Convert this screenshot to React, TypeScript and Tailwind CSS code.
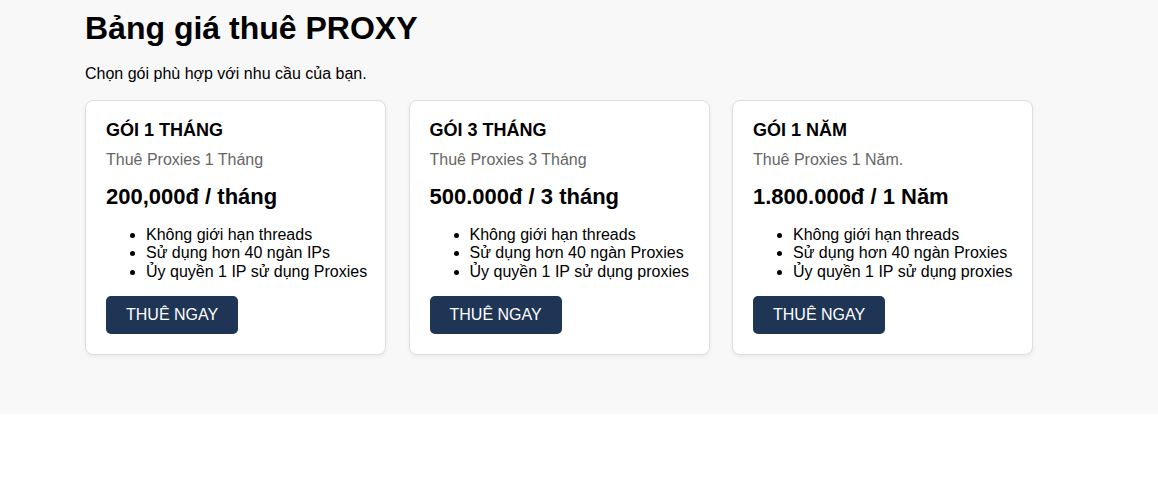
const plans = [
  {
    name: "GÓI 1 THÁNG",
    desc: "Thuê Proxies 1 Tháng",
    price: "200,000đ / tháng",
    features: [
      "Không giới hạn threads",
      "Sử dụng hơn 40 ngàn IPs",
      "Ủy quyền 1 IP sử dụng Proxies",
    ],
  },
  {
    name: "GÓI 3 THÁNG",
    desc: "Thuê Proxies 3 Tháng",
    price: "500.000đ / 3 tháng",
    features: [
      "Không giới hạn threads",
      "Sử dụng hơn 40 ngàn Proxies",
      "Ủy quyền 1 IP sử dụng proxies",
    ],
  },
  {
    name: "GÓI 1 NĂM",
    desc: "Thuê Proxies 1 Năm.",
    price: "1.800.000đ / 1 Năm",
    features: [
      "Không giới hạn threads",
      "Sử dụng hơn 40 ngàn Proxies",
      "Ủy quyền 1 IP sử dụng proxies",
    ],
  },
];

const PlanCard = ({ plan }: { plan: (typeof plans)[number] }) => {
  return (
    <div className="w-[301px] rounded-lg border border-[#dedede] bg-white px-5 pt-[19px] pb-5 shadow-[0_2px_4px_rgba(0,0,0,0.06)]">
      <h3 className="text-[18px] leading-[21px] font-bold text-black">
        {plan.name}
      </h3>
      <p className="mt-[10px] text-[16px] leading-[18px] text-[#666]">
        {plan.desc}
      </p>
      <p className="mt-[15px] text-[22px] leading-[25px] font-bold text-black">
        {plan.price}
      </p>
      <ul className="mt-[17px] list-disc pl-10 text-[16px] leading-[18.4px] text-black">
        {plan.features.map((f) => (
          <li key={f} className="whitespace-nowrap">
            {f}
          </li>
        ))}
      </ul>
      <button className="mt-[15px] rounded-[5px] bg-[#1f3556] px-5 py-[10px] text-[16px] leading-[18px] text-white">
        THUÊ NGAY
      </button>
    </div>
  );
};

export default function App() {
  return (
    <div className="min-h-[504px] bg-white font-['Liberation_Sans',Arial,sans-serif]">
      <section className="bg-[#f8f8f8] px-[85px] pt-[10px] pb-[59px]">
        <h1 className="text-[32px] leading-[37px] font-bold text-black">
          Bảng giá thuê PROXY
        </h1>
        <p className="mt-[18px] text-[16px] leading-[18px] text-black">
          Chọn gói phù hợp với nhu cầu của bạn.
        </p>
        <div className="mt-[17px] flex items-start gap-[22.5px]">
          {plans.map((p) => (
            <PlanCard key={p.name} plan={p} />
          ))}
        </div>
      </section>
    </div>
  );
}
